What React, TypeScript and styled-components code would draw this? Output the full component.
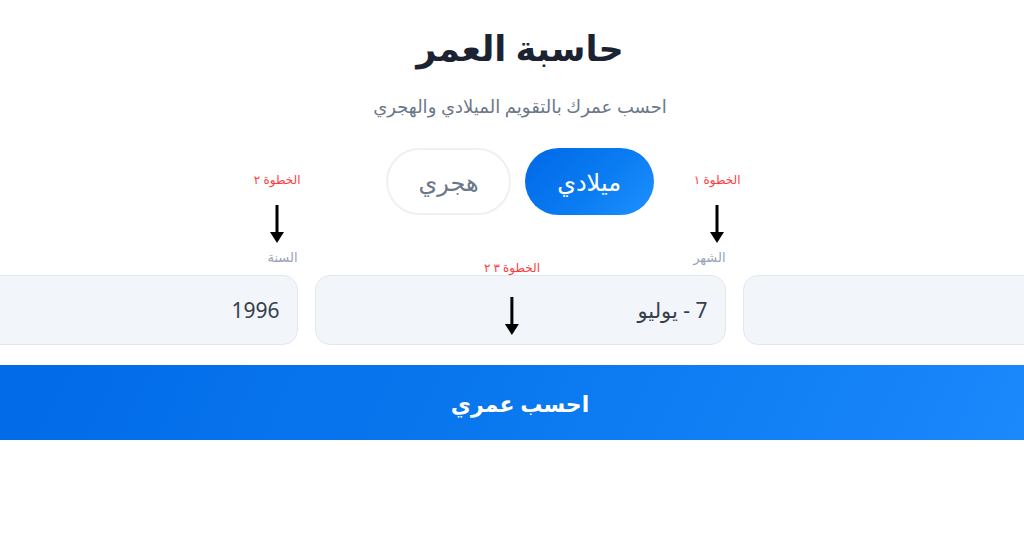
import React from "react";
import styled, { createGlobalStyle } from "styled-components";

const Global = createGlobalStyle`
  html, body { margin: 0; padding: 0; background: #ffffff; overflow: hidden; }
  body { font-family: "Noto Sans", "DejaVu Sans", sans-serif; }
`;

const Page = styled.div`
  direction: rtl;
  display: flex;
  flex-direction: column;
  align-items: center;
  padding: 0 0 0 16px;
  width: 1024px;
  box-sizing: border-box;
`;

const Title = styled.h1`
  margin: 22px 0 0;
  font-size: 35px;
  font-weight: 700;
  color: #1b2333;
  line-height: 52px;
`;

const Subtitle = styled.p`
  margin: 19px 0 0;
  font-size: 18px;
  color: #6b7788;
  line-height: 26px;
`;

const Toggle = styled.div`
  display: flex;
  gap: 14px;
  margin-top: 29px;
`;

const Pill = styled.button<{ $active?: boolean }>`
  height: 67px;
  box-sizing: border-box;
  padding: 0 30px;
  border-radius: 34px;
  font-family: inherit;
  font-size: 24px;
  line-height: 1;
  cursor: pointer;
  border: ${(p) => (p.$active ? "none" : "2px solid #eef0f3")};
  background: ${(p) =>
    p.$active ? "linear-gradient(135deg, #0068e6 0%, #0a7cf2 55%, #1f90ff 100%)" : "#ffffff"};
  color: ${(p) => (p.$active ? "#ffffff" : "#6b7788")};
  min-width: ${(p) => (p.$active ? "129px" : "122px")};
`;

const Form = styled.div`
  width: 1267px;
  flex-shrink: 0;
  display: flex;
  flex-direction: column;
  margin-top: 33px;
`;

const Fields = styled.div`
  display: grid;
  grid-template-columns: 1fr 1fr 1fr;
  gap: 17px;
`;

const Field = styled.div`
  position: relative;
  display: flex;
  flex-direction: column;
  gap: 9px;
`;

const Label = styled.label`
  font-size: 13px;
  color: #94a3b8;
  line-height: 18px;
  min-height: 18px;
`;

const Box = styled.div`
  height: 70px;
  box-sizing: border-box;
  background: #f2f5fa;
  border: 1.5px solid #e3e8ef;
  border-radius: 15px;
  display: flex;
  align-items: center;
  padding: 0 17px;
  font-size: 21px;
  color: #353f4d;
`;

const Submit = styled.button`
  margin-top: 20px;
  height: 75px;
  border: none;
  border-radius: 16px;
  background: linear-gradient(115deg, #0068e6 0%, #0a78ef 50%, #1f8dff 100%);
  color: #ffffff;
  font-family: inherit;
  font-size: 22px;
  font-weight: 700;
  cursor: pointer;
`;

const Note = styled.div<{ $top: number; $right?: number; $center?: boolean }>`
  position: absolute;
  top: ${(p) => p.$top}px;
  ${(p) =>
    p.$center
      ? "left: 50%; transform: translateX(calc(-50% - 8px));"
      : `right: ${p.$right}px;`}
  display: flex;
  flex-direction: column;
  align-items: center;
  pointer-events: none;
`;

const NoteText = styled.span<{ $gap: number }>`
  font-size: 12px;
  color: #ff3b3b;
  line-height: 16px;
  white-space: nowrap;
  margin-bottom: ${(p) => p.$gap}px;
`;

const Arrow = () => (
  <svg width="16" height="40" viewBox="0 0 16 40">
    <path d="M8 1 V30" stroke="#000" strokeWidth="3" />
    <path d="M1 28 H15 L8 39 Z" fill="#000" />
  </svg>
);

export default function App() {
  return (
    <>
      <Global />
      <Page>
        <Title>حاسبة العمر</Title>
        <Subtitle>احسب عمرك بالتقويم الميلادي والهجري</Subtitle>
        <Toggle>
          <Pill $active>ميلادي</Pill>
          <Pill>هجري</Pill>
        </Toggle>
        <Form>
          <Fields>
            <Field>
              <Label />
              <Box></Box>
            </Field>
            <Field>
              <Label>الشهر</Label>
              <Box>7 - يوليو</Box>
              <Note $top={-76} $right={-15}>
                <NoteText $gap={16}>الخطوة ١</NoteText>
                <Arrow />
              </Note>
              <Note $top={12} $center>
                <NoteText $gap={20}>الخطوة ٣ ٢</NoteText>
                <Arrow />
              </Note>
            </Field>
            <Field>
              <Label>السنة</Label>
              <Box>1996</Box>
              <Note $top={-76} $right={-3}>
                <NoteText $gap={16}>الخطوة ٢</NoteText>
                <Arrow />
              </Note>
            </Field>
          </Fields>
          <Submit>احسب عمري</Submit>
        </Form>
      </Page>
    </>
  );
}
